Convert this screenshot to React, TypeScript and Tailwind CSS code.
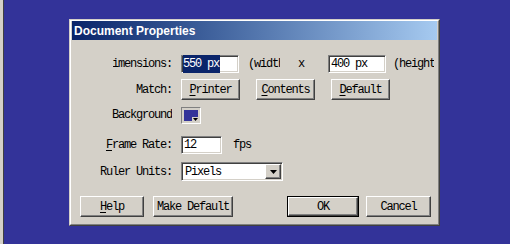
const raised =
  "border border-t-white border-l-white border-r-[#404040] border-b-[#404040] shadow-[inset_-1px_-1px_#808080] bg-[#d4d0c8]";
const sunken =
  "border border-t-[#808080] border-l-[#808080] border-r-white border-b-white shadow-[inset_1px_1px_#404040,inset_-1px_-1px_#d4d0c8] bg-white";

function Btn({ label, u, w, h = "h-[21px]", isDefault = false }: { label: string; u?: number; w: string; h?: string; isDefault?: boolean }) {
  const text =
    u === undefined ? (
      label
    ) : (
      <>
        {label.slice(0, u)}
        <u className="underline-offset-2">{label[u]}</u>
        {label.slice(u + 1)}
      </>
    );
  if (isDefault) {
    return (
      <div className={`${w} ${h} border border-black flex`}>
        <div className={`${raised} flex-1 flex items-center justify-center`}>{text}</div>
      </div>
    );
  }
  return <div className={`${raised} ${w} ${h} flex items-center justify-center`}>{text}</div>;
}

function Label({ children, cls = "w-[100px]" }: { children: React.ReactNode; cls?: string }) {
  return <div className={`${cls} flex justify-end overflow-hidden whitespace-nowrap mr-[9px]`}>{children}</div>;
}

export default function App() {
  return (
    <div className="flex h-[244px] w-[510px] overflow-hidden bg-[#333399] font-['Liberation_Mono',monospace] text-[12px] tracking-[-1.2px] text-black">
      <div className="w-[3px] bg-[#d4d0c8]" />
      <div className="w-px bg-[#404040]" />
      <div className="pl-[65px] pt-[19px]">
        {/* window */}
        <div className="w-[371px] h-[207px] border border-t-[#d4d0c8] border-l-[#d4d0c8] border-r-[#404040] border-b-[#404040]">
          <div className="h-full border border-t-white border-l-white border-r-[#808080] border-b-[#808080] bg-[#d4d0c8] px-px flex flex-col">
            <div className="h-[19px] bg-gradient-to-r from-[#0a246a] to-[#a6caf0] flex items-center pl-[2px] font-['Liberation_Sans',Arial,sans-serif] font-bold text-[12px] tracking-normal text-white">
              Document Properties
            </div>

            {/* dimensions */}
            <div className="mt-[15px] h-[18px] flex items-center">
              <Label cls="ml-[41px] w-[59px]">
                <span className="shrink-0">Dimensions:</span>
              </Label>
              <div className={`${sunken} w-[58px] h-[18px] flex items-center pl-[1px]`}>
                <span className="bg-[#0a246a] text-white pr-[1px]">550 px</span>
              </div>
              <div className="ml-[9px] w-[32px] overflow-hidden whitespace-nowrap">(width)</div>
              <div className="ml-[18px]">x</div>
              <div className={`${sunken} ml-[24px] w-[58px] h-[18px] flex items-center pl-[2px]`}>400 px</div>
              <div className="ml-[7px] w-[41px] overflow-hidden whitespace-nowrap">(height)</div>
            </div>

            {/* match */}
            <div className="mt-[6px] h-[21px] flex items-center">
              <Label>Match:</Label>
              <div className="flex gap-[16px]">
                <Btn label="Printer" u={0} w="w-[59px]" />
                <Btn label="Contents" u={0} w="w-[59px]" />
                <Btn label="Default" u={0} w="w-[59px]" />
              </div>
            </div>

            {/* background */}
            <div className="mt-[7px] h-[16px] flex items-center">
              <Label>Background</Label>
              <div className="w-[20px] h-[17px] border border-t-[#808080] border-l-[#808080] border-r-white border-b-white p-[2px]">
                <svg width="14" height="11" viewBox="0 0 14 11" className="block">
                  <rect x="0" y="0" width="14" height="11" fill="#333399" />
                  <path d="M8 7h6v4H8z" fill="#d4d0c8" />
                  <path d="M9 8h5l-2.5 3z" fill="#000" />
                </svg>
              </div>
            </div>

            {/* frame rate */}
            <div className="mt-[13px] h-[18px] flex items-center">
              <Label>
                <span>
                  <u className="underline-offset-2">F</u>rame Rate:
                </span>
              </Label>
              <div className={`${sunken} w-[41px] h-[18px] flex items-center pl-[2px]`}>12</div>
              <div className="ml-[11px]">fps</div>
            </div>

            {/* ruler units */}
            <div className="mt-[8px] h-[19px] flex items-center">
              <Label>Ruler Units:</Label>
              <div className={`${sunken} w-[102px] h-[19px] flex items-center pl-[3px] pr-[1px]`}>
                <span className="flex-1">Pixels</span>
                <div className={`${raised} w-[16px] h-[15px] flex items-center justify-center`}>
                  <svg width="7" height="4" viewBox="0 0 7 4" className="block">
                    <path d="M0 0h7L3.5 4z" fill="#000" />
                  </svg>
                </div>
              </div>
            </div>

            {/* bottom buttons */}
            <div className="mt-[15px] h-[21px] flex items-center pl-[8px]">
              <Btn label="Help" u={0} w="w-[64px]" />
              <div className="ml-[9px]">
                <Btn label="Make Default" w="w-[80px]" />
              </div>
              <div className="ml-[54px]">
                <Btn label="OK" w="w-[72px]" isDefault />
              </div>
              <div className="ml-[7px]">
                <Btn label="Cancel" w="w-[65px]" />
              </div>
            </div>
          </div>
        </div>
      </div>
    </div>
  );
}
